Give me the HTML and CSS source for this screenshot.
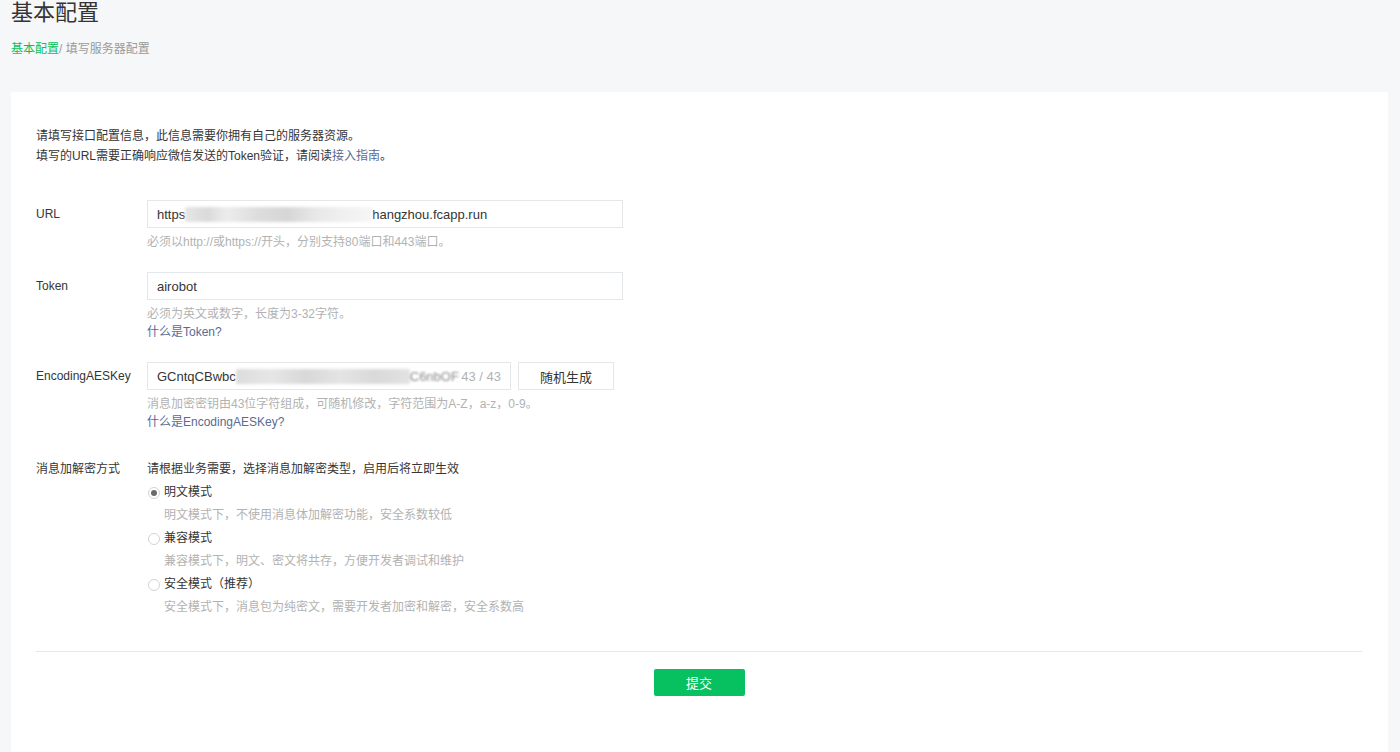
FILE: index.html
```html
<!DOCTYPE html>
<html lang="zh-CN">
<head>
<meta charset="utf-8">
<title>基本配置</title>
<link rel="stylesheet" href="styles.css">
</head>
<body>
<div class="page">
  <div class="page-head">
    <h1 class="title">基本配置</h1>
    <div class="crumb"><span class="crumb-link">基本配置</span>/ 填写服务器配置</div>
  </div>
  <div class="card">
    <div class="intro">
      <p>请填写接口配置信息，此信息需要你拥有自己的服务器资源。</p>
      <p>填写的URL需要正确响应微信发送的Token验证，请阅读<a class="link">接入指南</a>。</p>
    </div>

    <div class="row">
      <div class="label">URL</div>
      <div class="field">
        <div class="input input-wide"><span>https</span><span class="blur blur-url"></span><span>hangzhou.fcapp.run</span></div>
        <div class="hint">必须以http://或https://开头，分别支持80端口和443端口。</div>
      </div>
    </div>

    <div class="row">
      <div class="label">Token</div>
      <div class="field">
        <div class="input input-wide"><span>airobot</span></div>
        <div class="hint">必须为英文或数字，长度为3-32字符。</div>
        <div class="hint"><a class="link">什么是Token?</a></div>
      </div>
    </div>

    <div class="row">
      <div class="label">EncodingAESKey</div>
      <div class="field">
        <div class="input-line">
          <div class="input input-aes"><span class="keep">GCntqCBwbc</span><span class="blur blur-aes"></span><span class="blur-text">C6nbOF</span><span class="count">43 / 43</span></div>
          <button class="btn-plain">随机生成</button>
        </div>
        <div class="hint">消息加密密钥由43位字符组成，可随机修改，字符范围为A-Z，a-z，0-9。</div>
        <div class="hint"><a class="link">什么是EncodingAESKey?</a></div>
      </div>
    </div>

    <div class="row row-mode">
      <div class="label label-top">消息加解密方式</div>
      <div class="field">
        <div class="mode-tip">请根据业务需要，选择消息加解密类型，启用后将立即生效</div>
        <div class="radio"><span class="dot checked"></span>明文模式</div>
        <div class="radio-desc">明文模式下，不使用消息体加解密功能，安全系数较低</div>
        <div class="radio"><span class="dot"></span>兼容模式</div>
        <div class="radio-desc">兼容模式下，明文、密文将共存，方便开发者调试和维护</div>
        <div class="radio"><span class="dot"></span>安全模式（推荐）</div>
        <div class="radio-desc">安全模式下，消息包为纯密文，需要开发者加密和解密，安全系数高</div>
      </div>
    </div>

    <div class="footer">
      <button class="btn-primary">提交</button>
    </div>
  </div>
</div>
</body>
</html>
```

FILE: styles.css
```css
* { box-sizing: border-box; }
html, body { margin: 0; padding: 0; }
body {
  background: #f6f7f8;
  font-family: "Liberation Sans", "Noto Sans CJK SC", sans-serif;
  color: #353535;
  overflow: hidden;
}
.page { padding: 0 12px 0 11px; }
.title {
  margin: 0;
  font-size: 22px;
  line-height: 26px;
  font-weight: normal;
  color: #353535;
}
.crumb {
  margin-top: 14px;
  font-size: 12px;
  line-height: 18px;
  color: #9a9a9a;
}
.crumb-link { color: #07c160; }
.card {
  margin-top: 34px;
  background: #fff;
  padding: 34px 26px 80px 25px;
  min-height: 700px;
}
.intro p {
  margin: 0;
  font-size: 12px;
  line-height: 20px;
  color: #353535;
}
.link { color: #576b95; text-decoration: none; cursor: pointer; }
.row { display: flex; margin-top: 21px; }
.intro + .row { margin-top: 34px; }
.label {
  width: 111px;
  flex: none;
  font-size: 12px;
  line-height: 28px;
  color: #353535;
}
.label-top { line-height: 18px; }
.field { flex: 1; }
.input {
  height: 28px;
  border: 1px solid #e4e8eb;
  padding: 0 9px;
  display: flex;
  align-items: center;
  font-size: 13px;
  color: #353535;
  white-space: nowrap;
  overflow: hidden;
}
.input > span { flex: none; }
.input-wide { width: 476px; }
.input-aes { width: 364px; }
.input-line { display: flex; gap: 7px; }
.blur {
  display: inline-block;
  height: 15px;
  filter: blur(1.6px);
}
.blur-url {
  width: 187px;
  background: linear-gradient(90deg, #e6e6e6 0%, #dadada 12%, #ececec 22%, #dcdcdc 40%, #d6d6d6 55%, #e8e8e8 70%, #f0f0f0 85%, #f6f6f6 100%);
}
.blur-aes {
  width: 174px;
  background: linear-gradient(90deg, #dcdcdc 0%, #e6e6e6 20%, #d8d8d8 40%, #e4e4e4 60%, #d9d9d9 80%, #e2e2e2 100%);
}
.blur-text {
  color: #8a8a8a;
  filter: blur(1.2px);
}
.count {
  margin-left: auto;
  color: #b2b2b2;
}
.btn-plain {
  width: 96px;
  height: 28px;
  border: 1px solid #e4e8eb;
  background: #fff;
  font-family: inherit;
  font-size: 13px;
  color: #353535;
  padding: 0;
}
.hint {
  font-size: 12px;
  line-height: 18px;
  color: #b2b2b2;
}
.input + .hint, .input-line + .hint { margin-top: 5px; }
.row-mode { margin-top: 29px; }
.mode-tip {
  font-size: 12px;
  line-height: 18px;
  color: #353535;
  margin-bottom: 3px;
}
.radio {
  display: flex;
  align-items: center;
  font-size: 12px;
  line-height: 23px;
  color: #353535;
}
.dot {
  width: 12px;
  height: 12px;
  border: 1px solid #d4d4d4;
  border-radius: 50%;
  margin: 0 4px 0 1px;
  display: flex;
  align-items: center;
  justify-content: center;
}
.dot.checked::after {
  content: "";
  width: 6px;
  height: 6px;
  border-radius: 50%;
  background: #6b6b6b;
}
.radio-desc {
  padding-left: 17px;
  font-size: 12px;
  line-height: 23px;
  color: #b2b2b2;
}
.footer {
  margin-top: 32px;
  border-top: 1px solid #e7e7e7;
  padding-top: 17px;
  display: flex;
  justify-content: center;
}
.btn-primary {
  width: 91px;
  height: 27px;
  border: none;
  border-radius: 2px;
  background: #07c160;
  color: #fff;
  font-family: inherit;
  font-size: 13px;
  padding: 0;
}
```
